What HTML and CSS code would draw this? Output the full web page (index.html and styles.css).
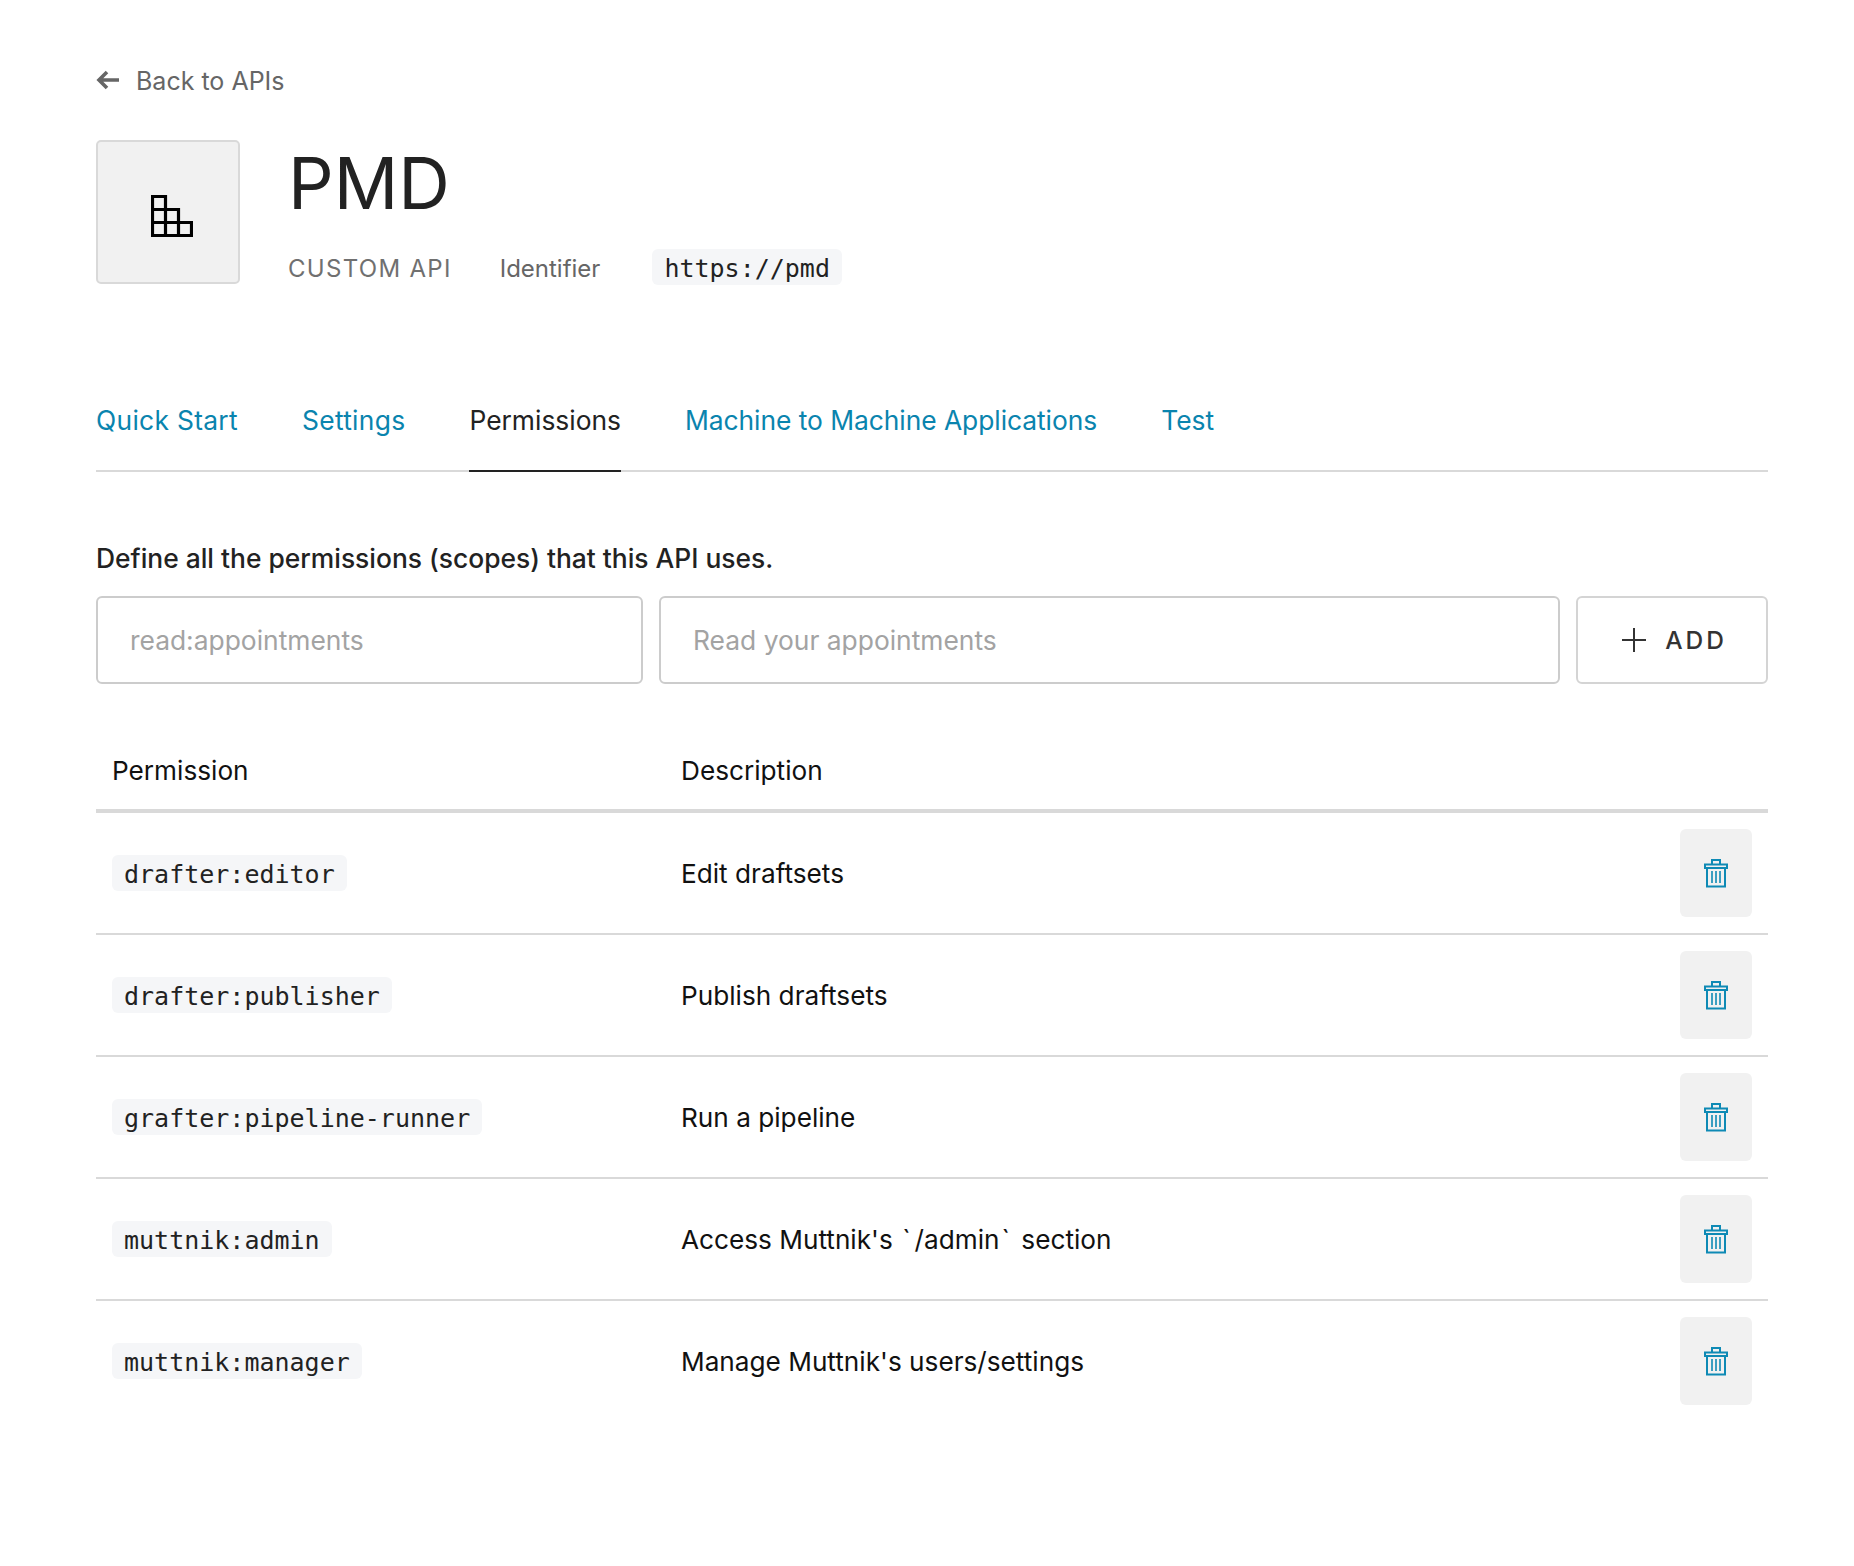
FILE: index.html
```html
<!DOCTYPE html>
<html lang="en">
<head>
    <meta charset="UTF-8">
    <title>PMD - Permissions</title>
    <link rel="stylesheet" href="styles.css">
</head>
<body>
    <main class="page">
        <a class="back" href="#">
            <svg width="24" height="20" viewBox="0 0 24 20"><path d="M23 10H3.500M11 2l-8 8 8 8" fill="none" stroke="#666" stroke-width="3.600"/></svg>
            <span>Back to APIs</span>
        </a>

        <header class="api-head">
            <div class="api-logo">
                <svg width="42" height="42" viewBox="0 0 42 42"><path d="M1.500 1.500h13v39h-13zM1.500 14.500h26v26h-26zM1.500 27.500h39v13h-39zM14.500 14.500v26M27.500 27.500v13" fill="none" stroke="#000" stroke-width="3.200"/></svg>
            </div>
            <div class="api-info">
                <h1>PMD</h1>
                <div class="api-meta">
                    <span class="api-type">CUSTOM API</span>
                    <span class="api-label">Identifier</span>
                    <code class="chip">https://pmd</code>
                </div>
            </div>
        </header>

        <nav class="tabs">
            <a href="#">Quick Start</a>
            <a href="#">Settings</a>
            <a href="#" class="active">Permissions</a>
            <a href="#">Machine to Machine Applications</a>
            <a href="#">Test</a>
        </nav>

        <p class="intro">Define all the permissions (scopes) that this API uses.</p>
        <form class="add-form">
            <input class="field field-scope" type="text" placeholder="read:appointments">
            <input class="field field-desc" type="text" placeholder="Read your appointments">
            <button class="add-btn" type="button">
                <svg width="26" height="26" viewBox="0 0 26 26"><path d="M13 1v24M1 13h24" fill="none" stroke="#333" stroke-width="2"/></svg>
                <span>ADD</span>
            </button>
        </form>

        <table class="perms">
            <thead>
                <tr><th class="col-perm">Permission</th><th>Description</th><th class="col-del"></th></tr>
            </thead>
            <tbody>
                <tr>
                    <td><code class="chip">drafter:editor</code></td>
                    <td>Edit draftsets</td>
                    <td><button class="del-btn" type="button"><svg class="trash" viewBox="0 0 24 30"><use href="#trash"/></svg></button></td>
                </tr>
                <tr>
                    <td><code class="chip">drafter:publisher</code></td>
                    <td>Publish draftsets</td>
                    <td><button class="del-btn" type="button"><svg class="trash" viewBox="0 0 24 30"><use href="#trash"/></svg></button></td>
                </tr>
                <tr>
                    <td><code class="chip">grafter:pipeline-runner</code></td>
                    <td>Run a pipeline</td>
                    <td><button class="del-btn" type="button"><svg class="trash" viewBox="0 0 24 30"><use href="#trash"/></svg></button></td>
                </tr>
                <tr>
                    <td><code class="chip">muttnik:admin</code></td>
                    <td>Access Muttnik's <span class="tick">`</span>/admin<span class="tick">`</span> section</td>
                    <td><button class="del-btn" type="button"><svg class="trash" viewBox="0 0 24 30"><use href="#trash"/></svg></button></td>
                </tr>
                <tr>
                    <td><code class="chip">muttnik:manager</code></td>
                    <td>Manage Muttnik's users/settings</td>
                    <td><button class="del-btn" type="button"><svg class="trash" viewBox="0 0 24 30"><use href="#trash"/></svg></button></td>
                </tr>
            </tbody>
        </table>
    </main>

    <!-- Icon shared by the delete buttons -->
    <svg class="sprite" width="0" height="0">
        <symbol id="trash" viewBox="0 0 24 30">
            <path d="M1 6.500h22v3.500H1zM8 6.500V2h8v4.500M3 10v18.500h18V10" fill="none" stroke="#0e8ab5" stroke-width="2"/>
            <path d="M8 13v12M12 13v12M16 13v12" fill="none" stroke="#0e8ab5" stroke-width="1.600"/>
        </symbol>
    </svg>
</body>
</html>
```

FILE: styles.css
```css
body {
    margin: 0;
    font-family: Inter, "Noto Sans", sans-serif;
    font-size: 26.2px;
    color: #222;
    background: #fff;
}
a {
    text-decoration: none;
}
.page {
    padding: 62px 86px 100px 96px;
}
.sprite {
    display: block;
}

/* Back link */
.back {
    display: flex;
    align-items: center;
    gap: 16px;
    height: 36px;
    color: #666;
    font-size: 25px;
}
.back span {
    padding-top: 2px;
}

/* API header */
.api-head {
    display: flex;
    gap: 48px;
    margin-top: 42px;
}
.api-logo {
    box-sizing: border-box;
    width: 144px;
    height: 144px;
    display: flex;
    align-items: center;
    justify-content: center;
    padding: 7px 0 0 8px;
    background: #f1f1f1;
    border: 2px solid #d9d9d9;
    border-radius: 5px;
}
.api-info h1 {
    margin: 0;
    padding-top: 1px;
    font-size: 71.5px;
    line-height: 84px;
    font-weight: 400;
    color: #222;
}
.api-meta {
    display: flex;
    align-items: center;
    gap: 48px;
    margin-top: 24px;
    color: #666;
}
.api-type {
    padding-top: 2px;
    letter-spacing: 1.300px;
    font-size: 24px;
    color: #707070;
}
.api-label {
    padding-top: 2px;
    font-size: 24px;
    margin-right: 4px;
}
.chip {
    display: inline-block;
    height: 36px;
    line-height: 39px;
    padding: 0 12px;
    background: #f5f6f8;
    border-radius: 6px;
    font-family: "DejaVu Sans Mono", monospace;
    font-size: 25px;
    color: #222;
}

/* Tabs */
.tabs {
    display: flex;
    gap: 64px;
    margin-top: 99px;
    border-bottom: 2px solid #d9d9d9;
}
.tabs a {
    padding: 20px 0 34px;
    line-height: 32px;
    font-size: 26.4px;
    color: #0a84ae;
    margin-bottom: -2px;
    border-bottom: 2px solid transparent;
}
.tabs a:nth-child(-n+2) {
    letter-spacing: 0.3px;
}
.tabs a:nth-child(4) {
    letter-spacing: -0.05px;
}
.tabs a.active {
    color: #222;
    border-bottom-color: #222;
}

/* Add form */
.intro {
    margin: 68px 0 0;
    line-height: 36px;
    font-size: 26.4px;
    font-weight: 500;
}
.add-form {
    display: flex;
    gap: 16px;
    margin-top: 20px;
}
.field {
    box-sizing: border-box;
    height: 88px;
    padding: 0 32px;
    border: 2px solid #ccc;
    border-radius: 6px;
    font: inherit;
    font-size: 26.4px;
    color: #222;
}
.field::placeholder {
    color: #a3a3a3;
}
.field-scope {
    width: 547px;
}
.field-desc {
    flex: 1;
    min-width: 0;
}
.add-btn {
    box-sizing: border-box;
    width: 192px;
    height: 88px;
    display: flex;
    align-items: center;
    justify-content: center;
    gap: 18.5px;
    padding: 0 0 0 3.500px;
    background: #fff;
    border: 2px solid #d4d4d4;
    border-radius: 6px;
    font-family: inherit;
    font-size: 24.500px;
    font-weight: 500;
    letter-spacing: 3px;
    color: #333;
}

/* Permission table */
.perms {
    width: 100%;
    margin-top: 48px;
    border-collapse: collapse;
    table-layout: fixed;
}
.perms th {
    height: 77px;
    padding: 0 16px;
    text-align: left;
    font-weight: 400;
    color: #111;
    border-bottom: 4px solid #d9d9d9;
}
.col-perm {
    width: 537px;
}
.col-del {
    width: 72px;
}
.perms td {
    height: 88px;
    padding: 16px;
    color: #111;
    border-bottom: 2px solid #d9d9d9;
}
.perms tr:last-child td {
    border-bottom: 0;
}
.tick {
    margin: 0 4px 0 2px;
}
.del-btn {
    display: flex;
    align-items: center;
    justify-content: center;
    width: 72px;
    height: 88px;
    padding: 0;
    background: #f1f1f1;
    border: 0;
    border-radius: 6px;
}
.trash {
    width: 24px;
    height: 30px;
}
```
